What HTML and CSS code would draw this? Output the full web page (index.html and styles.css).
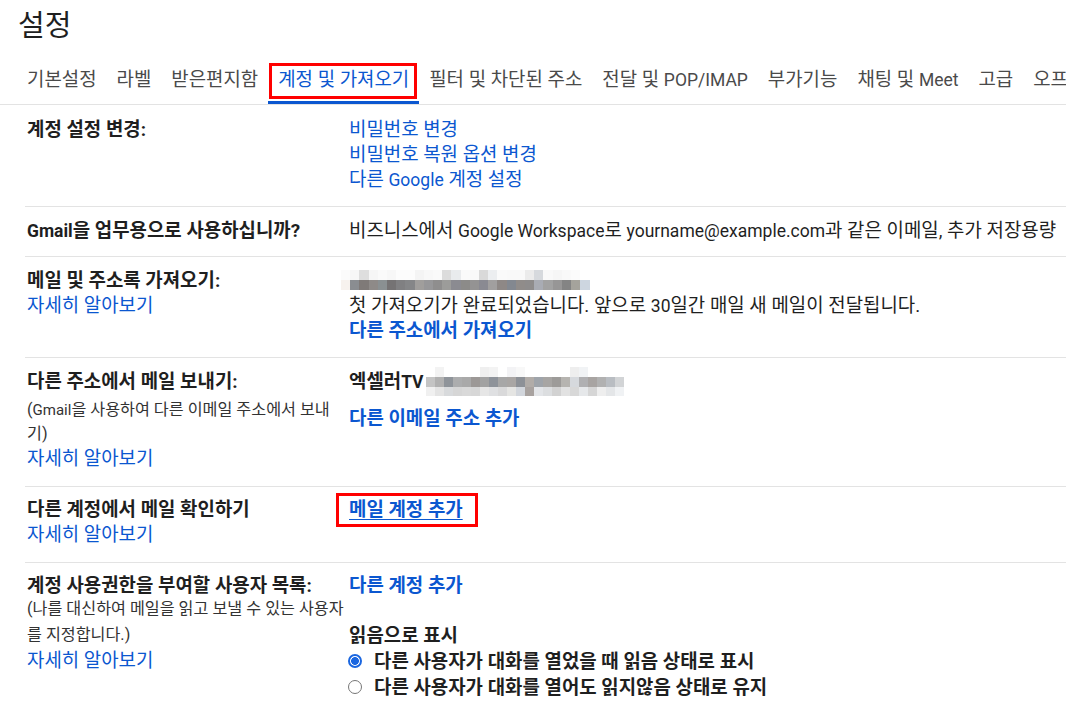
FILE: index.html
```html
<!DOCTYPE html>
<html lang="ko">
<head>
<meta charset="utf-8">
<title>설정</title>
<link rel="stylesheet" href="styles.css">
</head>
<body>
<div class="page">
  <h1 class="title">설정</h1>
  <nav class="tabs">
    <a class="tab">기본설정</a>
    <a class="tab">라벨</a>
    <a class="tab">받은편지함</a>
    <a class="tab active">계정 및 가져오기<span class="tab-mark"></span></a>
    <a class="tab">필터 및 차단된 주소</a>
    <a class="tab">전달 및 <span class="en">POP/IMAP</span></a>
    <a class="tab">부가기능</a>
    <a class="tab">채팅 및 <span class="en">Meet</span></a>
    <a class="tab">고급</a>
    <a class="tab">오프라인</a>
  </nav>

  <div class="rows">
    <section class="row row-1">
      <div class="label"><b>계정 설정 변경:</b></div>
      <div class="value">
        <a class="link">비밀번호 변경</a>
        <a class="link">비밀번호 복원 옵션 변경</a>
        <a class="link">다른 <span class="en">Google</span> 계정 설정</a>
      </div>
    </section>

    <section class="row row-2">
      <div class="label"><b><span class="en">Gmail</span>을 업무용으로 사용하십니까?</b></div>
      <div class="value nowrap">비즈니스에서 <span class="en">Google Workspace</span>로 <span class="en">yourname@example.com</span>과 같은 이메일, 추가 저장용량</div>
    </section>

    <section class="row row-3">
      <div class="label">
        <b>메일 및 주소록 가져오기:</b>
        <a class="link">자세히 알아보기</a>
      </div>
      <div class="value">
        <div class="line"><span class="mosaic mosaic-a"></span></div>
        <div>첫 가져오기가 완료되었습니다. 앞으로 <span class="en">30</span>일간 매일 새 메일이 전달됩니다.</div>
        <a class="link strong">다른 주소에서 가져오기</a>
      </div>
    </section>

    <section class="row row-4">
      <div class="label">
        <b>다른 주소에서 메일 보내기:</b>
        <div class="note note-a">(<span class="en">Gmail</span>을 사용하여 다른 이메일 주소에서 보내<br>기)</div>
        <a class="link">자세히 알아보기</a>
      </div>
      <div class="value">
        <div class="sender"><b>엑셀러<span class="en">TV</span></b><span class="mosaic mosaic-b"></span></div>
        <a class="link strong add-address">다른 이메일 주소 추가</a>
      </div>
    </section>

    <section class="row row-5">
      <div class="label">
        <b>다른 계정에서 메일 확인하기</b>
        <a class="link">자세히 알아보기</a>
      </div>
      <div class="value">
        <span class="boxed"><a class="link strong underline">메일 계정 추가</a><span class="red-box"></span></span>
      </div>
    </section>

    <section class="row row-6">
      <div class="label">
        <b>계정 사용권한을 부여할 사용자 목록:</b>
        <div class="note note-b">(나를 대신하여 메일을 읽고 보낼 수 있는 사용자<br>를 지정합니다.)</div>
        <a class="link">자세히 알아보기</a>
      </div>
      <div class="value">
        <a class="link strong">다른 계정 추가</a>
        <div class="mark-title"><b>읽음으로 표시</b></div>
        <label class="option"><span class="radio checked"></span><b>다른 사용자가 대화를 열었을 때 읽음 상태로 표시</b></label>
        <label class="option"><span class="radio"></span><b>다른 사용자가 대화를 열어도 읽지않음 상태로 유지</b></label>
      </div>
    </section>
  </div>
</div>
</body>
</html>
```

FILE: styles.css
```css
html, body {
  margin: 0;
  padding: 0;
  background: #ffffff;
  overflow: hidden;
}

body {
  font-family: Roboto, "Noto Sans CJK KR", sans-serif;
  font-size: 18.9px;
  line-height: 25px;
  color: #1f1f1f;
  width: 1066px;
  height: 707px;
}

.page {
  width: 1066px;
}

/* Latin runs keep the original 17.5px size */
.en {
  font-size: 17.5px;
  line-height: 1;
}

.title {
  margin: 0;
  padding: 8px 0 0 18px;
  font-size: 29px;
  line-height: 36px;
  font-weight: 400;
  color: #1f1f1f;
}

.tabs {
  display: flex;
  margin-top: 10px;
  padding-left: 17px;
  border-bottom: 1px solid #e3e3e3;
  white-space: nowrap;
  overflow: hidden;
}

.tab {
  position: relative;
  flex: none;
  padding: 14px 10px 12px;
  line-height: 24px;
  color: #4a4a4a;
}

.tab.active {
  color: #0b57d0;
}

.tab.active::after {
  content: "";
  position: absolute;
  left: 0;
  right: 0;
  bottom: 0;
  height: 3px;
  background: #0b57d0;
}

.tab-mark {
  position: absolute;
  left: 1px;
  right: 2px;
  top: 9px;
  height: 36px;
  box-sizing: border-box;
  border: 3px solid #ff0000;
}

.rows {
  margin-left: 25px;
}

.row {
  display: grid;
  grid-template-columns: 324px 1fr;
  border-bottom: 1px solid #e3e3e3;
}

.row-1 { padding: 12px 0 14px; }
.row-2 { padding: 11px 0 13px; }
.row-3 { padding: 11px 0 14px; }
.row-4 { padding: 11px 0 15px; }
.row-5 { padding: 10px 0 15px; }
.row-6 { padding: 10px 0 20px; border-bottom: none; }

.label {
  padding-left: 2px;
  display: flex;
  flex-direction: column;
  align-items: flex-start;
}

.label b,
.value b {
  font-weight: 700;
}

.value {
  display: flex;
  flex-direction: column;
  align-items: flex-start;
  min-width: 0;
}

.nowrap {
  display: block;
  white-space: nowrap;
  overflow: hidden;
}

.link {
  color: #0b57d0;
  text-decoration: none;
}

.link.strong {
  font-weight: 700;
}

.link.underline {
  text-decoration: underline;
  text-underline-offset: 3px;
}

.note {
  font-size: 16.2px;
  color: #333333;
  white-space: nowrap;
}

.note .en {
  font-size: 15px;
}

.note-a {
  line-height: 24px;
  margin-top: 4px;
}

.note-b {
  line-height: 26px;
  margin-top: -2px;
}

.line {
  height: 25px;
}

.mosaic {
  display: block;
  flex: none;
}

.mosaic-a {
  width: 249px;
  height: 20px;
  margin: 2px 0 0 -8px;
  background:
    linear-gradient(90deg, #fbfbfb 0 9.2px, #f7f7f7 0 18.4px, #dedede 0 27.6px, #f6f6f6 0 36.8px, #fafafa 0 46px, #f7f7f7 0 55.2px, #fcfcfc 0 64.4px, #fcfcfc 0 73.6px, #f4f4f4 0 82.8px, #f8f8f8 0 92px, #fafafa 0 101.2px, #dcdcdc 0 110.4px, #e9ebed 0 119.6px, #fafafa 0 128.8px, #f9f9f9 0 138px, #d9d9d9 0 147.2px, #eceef0 0 156.4px, #fafafa 0 165.6px, #f9f9f9 0 174.8px, #f9f9f9 0 184px, #ebebeb 0 193.2px, #d6d9dd 0 202.4px, #f9f9f9 0 211.6px, #f6f6f6 0 220.8px, #f9f9f9 0 230px, #fbfbfb 0 239.2px, #ffffff 0 249px) top / 100% 10px no-repeat,
    linear-gradient(90deg, #f7f2ee 0 9.2px, #8a8d91 0 18.4px, #7f7a78 0 27.6px, #8e8a88 0 36.8px, #8a9092 0 46px, #757374 0 55.2px, #808082 0 64.4px, #858688 0 73.6px, #a09e9c 0 82.8px, #979799 0 92px, #8f8e8e 0 101.2px, #9c9c9a 0 110.4px, #8b8b91 0 119.6px, #8c8b89 0 128.8px, #949393 0 138px, #8a8a92 0 147.2px, #a19f9f 0 156.4px, #8e8886 0 165.6px, #838890 0 174.8px, #908c8a 0 184px, #8e8c8c 0 193.2px, #a9acb4 0 202.4px, #a2a2a2 0 211.6px, #979696 0 220.8px, #848484 0 230px, #a5a39c 0 239.2px, #cdd6e0 0 249px) bottom / 100% 10px no-repeat;
}

.sender {
  display: flex;
  align-items: center;
  height: 25px;
}

.mosaic-b {
  width: 198px;
  height: 29px;
  margin-left: 2px;
  background:
    linear-gradient(90deg, #ffffff 0 9px, #f3f3f3 0 18px, #ffffff 0 27px, #ffffff 0 36px, #ffffff 0 45px, #ffffff 0 54px, #efefef 0 63px, #f3f3f3 0 72px, #ffffff 0 81px, #f3f3f5 0 90px, #f8f8f8 0 99px, #ffffff 0 108px, #ffffff 0 117px, #ffffff 0 126px, #ffffff 0 135px, #ffffff 0 144px, #eeeeee 0 153px, #f1f3f5 0 162px, #ffffff 0 171px, #ffffff 0 180px, #ffffff 0 189px, #ffffff 0 198px) 0 0 / 100% 10px no-repeat,
    linear-gradient(90deg, #c4c4c4 0 9px, #b1b1b1 0 18px, #8f949a 0 27px, #acadae 0 36px, #a9a9a9 0 45px, #9c9896 0 54px, #a2a2a2 0 63px, #8e939a 0 72px, #a7a7a7 0 81px, #a9a6a4 0 90px, #8d9197 0 99px, #b1aca8 0 108px, #9fa4aa 0 117px, #a7a5a3 0 126px, #9d9b99 0 135px, #b6b4b0 0 144px, #d6d9dd 0 153px, #b0b0b2 0 162px, #a8a4a2 0 171px, #b1b1b1 0 180px, #b9bdc2 0 189px, #d2d4d6 0 198px) 0 10px / 100% 10px no-repeat,
    linear-gradient(90deg, #f0f0f0 0 9px, #e4e4e4 0 18px, #d8dadc 0 27px, #d6d6d6 0 36px, #d9d9d9 0 45px, #d7d7d7 0 54px, #e6e6e6 0 63px, #dfe0e2 0 72px, #d9d9da 0 81px, #e5e5e3 0 90px, #d2d6dc 0 99px, #a8a29f 0 108px, #e3e5e8 0 117px, #dcdee0 0 126px, #d2d2d2 0 135px, #e2e2e2 0 144px, #d8d8d8 0 153px, #e6e8ea 0 162px, #d6d6d6 0 171px, #eeeeee 0 180px, #e4e6e8 0 189px, #f0f2f4 0 198px) 0 20px / 100% 9px no-repeat;
}

.add-address {
  margin-top: 12px;
}

.boxed {
  position: relative;
  display: inline-block;
}

.red-box {
  position: absolute;
  left: -13px;
  top: -4px;
  right: -15px;
  height: 34px;
  box-sizing: border-box;
  border: 3px solid #ff0000;
}

.mark-title {
  margin-top: 25px;
}

.option {
  display: flex;
  align-items: center;
  height: 26px;
  white-space: nowrap;
}

.radio {
  flex: none;
  width: 14px;
  height: 14px;
  box-sizing: border-box;
  border-radius: 50%;
  border: 1px solid #767676;
  margin: 0 12px 0 -1px;
  background: #ffffff;
}

.radio.checked {
  border: 2px solid #1a66e0;
  background: radial-gradient(circle, #1a66e0 0 3.6px, #ffffff 4.2px);
}
```
